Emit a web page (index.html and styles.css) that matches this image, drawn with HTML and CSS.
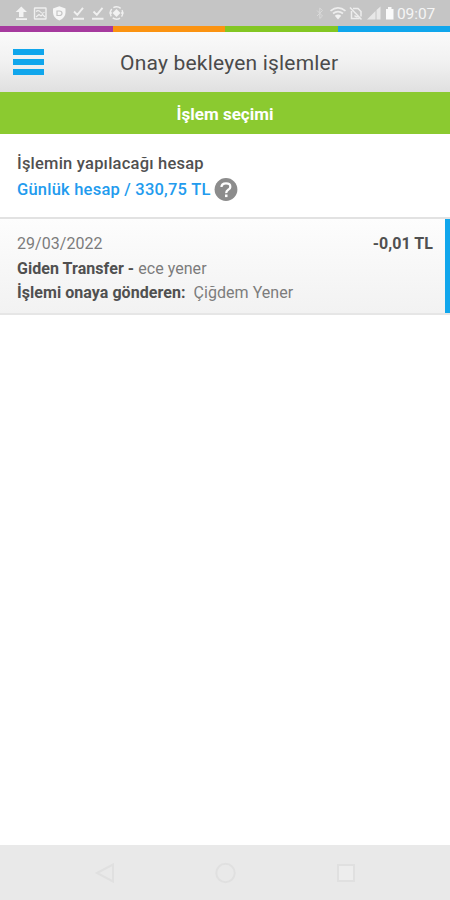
FILE: index.html
```html
<!DOCTYPE html>
<html lang="tr">
<head>
<meta charset="utf-8">
<title>Onay bekleyen işlemler</title>
<link rel="stylesheet" href="styles.css">
</head>
<body>
<div class="screen">
  <div class="status">
    <svg class="status-left" width="112" height="18" viewBox="14 5 112 18" fill="none" stroke="#f0f0f0" stroke-width="1.4">
      <path d="M21.300 6.500 L27 12 H23.500 V17 H19 V12 H15.700 Z M16 18.300 H27 V20 H16 Z" fill="#f2f2f2" stroke="none"/>
      <rect x="34.500" y="8" width="11.500" height="11" rx=".5"/>
      <path d="M36 11.500 Q38.500 9.500 40.500 12 T44.500 12 M36 17 L39 14.500 L41 16 L42.500 14.500 L45 17" stroke-width="1.100"/>
      <path d="M59.300 6.300 L65.500 8.500 V12.500 Q65.500 17.500 59.300 20.500 Q53 17.500 53 12.500 V8.500 Z" fill="#f5f5f5" stroke="none"/>
      <path d="M57 15.500 V11 H59.500 Q62 11 62 13.200 T59.500 15.500 Z" stroke="#c5c5c5" stroke-width="1.200"/>
      <path d="M74 11.500 L77.300 14.800 L83 7.800 M73 18.800 H84 M93.500 11.500 L96.800 14.800 L102.500 7.800 M92 18.800 H103.500" stroke-width="1.900"/>
      <circle cx="116.500" cy="13" r="6.200" stroke-dasharray="7.700 2" stroke-dashoffset="3.900"/>
      <path d="M116.500 9 L120.500 13 L116.500 17 L112.500 13 Z" fill="#f2f2f2" stroke="none"/>
      <path d="M109.500 13 H112 M121 13 H123.500"/>
    </svg>
    <div class="status-right">
      <svg width="80" height="18" viewBox="315 5 80 18" fill="none" stroke="#ededed" stroke-width="1.500">
        <path d="M317 10.500 L322.500 16 L319.800 18.500 V8 L322.500 10.500 L317 16" stroke="#d9d9d9" stroke-width="1"/>
        <path d="M330.500 10.800 Q338 5 345.500 10.800 M333 13.500 Q338 9.600 343 13.500" stroke-width="1.700"/>
        <path d="M334.800 15.800 Q338 13.200 341.200 15.800 L338 19.500 Z" fill="#f2f2f2" stroke="none"/>
        <path d="M353 8.500 H358 L361 11.500 V16.500 M351.500 11 V18.500 H359.500 M350 7.500 L361.500 19.500 M354.500 15.500 A3 3 0 0 0 358.500 16"/>
        <path d="M367 19.500 L375.500 11 V19.500 Z M376.500 10 L380.500 6.500 V19.500 H376.500 Z" fill="#e8e8e8" stroke="none"/>
        <path d="M386 9 H388 V7 H391.500 V9 H393.500 V19.500 H386 Z" fill="#fafafa" stroke="none"/>
      </svg>
      <span class="clock">09:07</span>
    </div>
  </div>
  <div class="strip"><i class="purple"></i><i class="orange"></i><i class="lime"></i><i class="blue"></i></div>
  <header class="header">
    <div class="menu"><i></i><i></i><i></i></div>
    <h1>Onay bekleyen işlemler</h1>
  </header>
  <div class="section"><span>İşlem seçimi</span></div>
  <div class="account">
    <div><span class="account-label">İşlemin yapılacağı hesap</span></div>
    <div class="account-row">
      <span class="account-value">Günlük hesap / 330,75 TL</span>
      <svg width="24" height="24" viewBox="0 0 24 24">
        <circle cx="12" cy="11.500" r="11.400" fill="#8c8c8c"/>
        <path d="M7.500 9.100 Q7.500 5.300 12 5.300 T16.300 8.900 Q16.300 10.500 14.200 11.700 T12.200 15.100" fill="none" stroke="#fff" stroke-width="2.300"/>
        <rect x="11" y="16.500" width="2.500" height="2.600" fill="#fff"/>
      </svg>
    </div>
  </div>
  <div class="card">
    <div class="line"><span class="date">29/03/2022</span><b class="amount">-0,01 TL</b></div>
    <div class="line"><span><b class="kind">Giden Transfer -</b><span class="target">ece yener</span></span></div>
    <div class="line"><span><b class="sender-label">İşlemi onaya gönderen:</b><span class="sender">Çiğdem Yener</span></span></div>
  </div>
  <main class="empty"></main>
  <nav class="nav">
    <svg width="22" height="22" viewBox="0 0 22 22"><path d="M3 11 L19 2.500 V19.500 Z"/></svg>
    <svg width="22" height="22" viewBox="0 0 22 22"><circle cx="10.500" cy="11" r="9.200"/></svg>
    <svg width="22" height="22" viewBox="0 0 22 22"><rect x="3" y="3" width="16" height="16" fill="#ededed"/></svg>
  </nav>
</div>
</body>
</html>
```

FILE: styles.css
```css
* { box-sizing: border-box; }
body { margin: 0; font-family: Roboto, "Liberation Sans", sans-serif; background: #fff; color: #505050; }
svg { display: block; flex: none; }
.screen { width: 450px; height: 900px; display: flex; flex-direction: column; overflow: hidden; }
.status { height: 26px; flex: none; background: #c5c5c5; display: flex; justify-content: space-between; padding: 5px 15px 0 14px; }
.status-right { display: flex; gap: 2px; }
.clock { color: #f5f5f5; font-size: 15.5px; line-height: 18px; width: 38px; white-space: nowrap; letter-spacing: -0.1px; }
.strip { height: 6px; flex: none; display: grid; grid-template-columns: 113px 112px 113px 112px; }
.purple { background: #a63a9e; }
.orange { background: #fb9311; }
.lime { background: #83c623; }
.blue { background: #10a6ec; }
.header { height: 60px; flex: none; display: flex; align-items: center; padding-left: 13px; background: linear-gradient(#fafafa, #f1f1f1 50%, #e0e0e0); }
.menu { width: 31px; height: 26px; display: flex; flex-direction: column; justify-content: space-between; }
.menu i { height: 6px; background: #10a6ec; }
h1 { margin: 2px 0 0 76px; font-size: 21px; font-weight: 400; line-height: 26px; letter-spacing: 0.2px; white-space: nowrap; color: #4b4b4b; }
.section { height: 42px; flex: none; background: #8bca30; color: #fff; display: flex; align-items: center; justify-content: center; font-size: 17px; font-weight: 700; padding-top: 2px; }
.account { height: 83px; flex: none; padding: 17px 17px 0; font-size: 16.5px; line-height: 25px; font-weight: 500; letter-spacing: 0.22px; white-space: nowrap; }
.account-row { display: flex; align-items: center; gap: 3px; color: #229bee; height: 27px; }
.card { height: 98px; flex: none; border-top: 2px solid #e2e2e2; border-bottom: 2px solid #e6e6e6; padding: 13px 12px 0 17px; background: linear-gradient(#fdfdfd, #f2f2f2); position: relative; font-size: 16px; letter-spacing: 0.05px; white-space: nowrap; }
.card::after { content: ""; position: absolute; right: 0; top: 0; width: 5px; height: 94px; background: #10a6ec; }
.line { height: 24.500px; line-height: 24.500px; display: flex; justify-content: space-between; padding-right: 5px; }
.card b { font-weight: 700; color: #505050; }
.date, .target, .sender { color: #7c7c7c; }
.target { margin-left: 4px; }
.sender { margin-left: 8px; }
.empty { flex: 1; }
.nav { height: 55px; flex: none; background: #e9e9e9; display: flex; justify-content: space-between; padding: 17px 93px 0 94px; }
.nav svg { fill: none; stroke: #e0e0e0; stroke-width: 2; }
```
